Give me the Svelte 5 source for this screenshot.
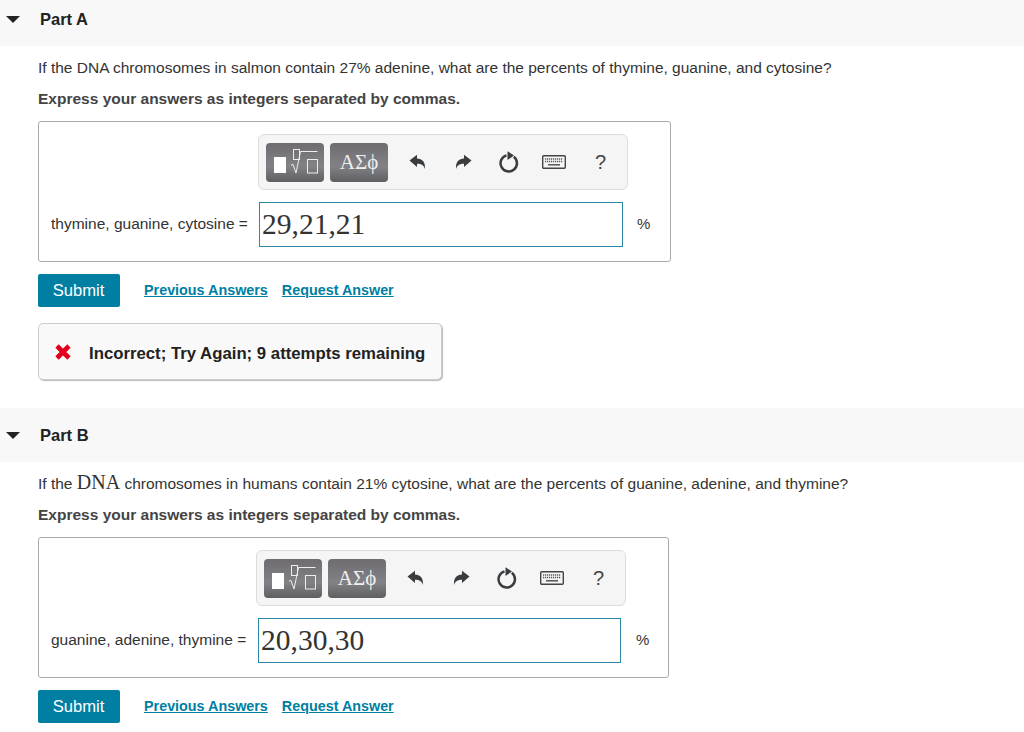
<script>
	const parts = [
		{
			name: 'Part A',
			label: 'thymine, guanine, cytosine =',
			value: '29,21,21',
			wide: true,
			incorrect: true
		},
		{
			name: 'Part B',
			label: 'guanine, adenine, thymine =',
			value: '20,30,30',
			wide: false,
			incorrect: false
		}
	];
</script>

{#snippet tools()}
	<div class="toolbar">
		<button class="tplBtn" aria-label="templates">
			<svg width="58" height="39" viewBox="0 0 58 39">
				<rect x="8" y="14" width="12" height="16" fill="#fff" />
				<g fill="none" stroke="#eee" stroke-width="1">
					<rect x="27.500" y="6.500" width="6" height="10" />
					<path d="M25 22l2-.5 3 8.500 4.500-21.500h17" />
					<rect x="41.500" y="16.500" width="10" height="13.500" />
				</g>
			</svg>
		</button>
		<button class="greek">ΑΣϕ</button>
		<span class="icons">
			<svg class="undo" width="20" height="20" viewBox="0 0 20 20">
				<path d="M1.500 8.500 9 2.800v3.700c5 .2 8.500 3 8 10.500-1.200-3.800-3.500-5.300-8-5.300v3.300z" fill="#3a3d40" />
			</svg>
			<svg class="redo" width="20" height="20" viewBox="0 0 20 20">
				<path d="M18.500 8.500 11 2.800v3.700c-5 .2-8.500 3-8 10.500 1.200-3.800 3.500-5.300 8-5.300v3.300z" fill="#3a3d40" />
			</svg>
			<svg class="reset" width="24" height="24" viewBox="0 0 24 24">
				<path d="M16.800 6.800A8.200 8.200 0 1 1 9.500 5.400" fill="none" stroke="#3a3d40" stroke-width="2.500" />
				<path d="M10.500 1.200 17 5.500l-6.500 4.500z" fill="#3a3d40" />
			</svg>
			<svg class="keyboard" width="24" height="14" viewBox="0 0 24 14">
				<rect x=".7" y=".7" width="22.600" height="12.600" rx="1" fill="#f5f5f5" stroke="#444" stroke-width="1.400" />
				<path d="M3 4h18M3 6.500h18" stroke="#555" stroke-width="1.500" stroke-dasharray="1.200 .8" />
				<path d="M6 9.800h12" stroke="#555" stroke-width="1.500" />
			</svg>
			<span class="help">?</span>
		</span>
	</div>
{/snippet}

<main>
	{#each parts as part}
		<section class:wide={part.wide}>
			<header>
				<span class="caret"></span>
				<h2>{part.name}</h2>
			</header>
			<div class="body">
				{#if part.wide}
					<p class="question">If the DNA chromosomes in salmon contain 27% adenine, what are the percents of thymine, guanine, and cytosine?</p>
				{:else}
					<p class="question">If the <span class="math">DNA</span> chromosomes in humans contain 21% cytosine, what are the percents of guanine, adenine, and thymine?</p>
				{/if}
				<p class="instruction">Express your answers as integers separated by commas.</p>
				<div class="answerBox">
					<div class="toolRow">
						{@render tools()}
					</div>
					<div class="inputRow">
						<span class="label">{part.label}</span>
						<div class="input">{part.value}</div>
						<span class="unit">%</span>
					</div>
				</div>
				<div class="actions">
					<button class="submit">Submit</button>
					<a href="#prev">Previous Answers</a>
					<a href="#req">Request Answer</a>
				</div>
				{#if part.incorrect}
					<div class="feedback">
						<svg width="18" height="18" viewBox="0 0 18 18">
							<path d="M3 3 15 15M15 3 3 15" stroke="#e3001b" stroke-width="4.600" />
						</svg>
						<span>Incorrect; Try Again; 9 attempts remaining</span>
					</div>
				{/if}
			</div>
		</section>
	{/each}
</main>

<style>
	:global(body) {
		margin: 0;
		background: #fff;
		font-family: "Liberation Sans", Arial, sans-serif;
		color: #333;
	}
	main {
		height: 732px;
		overflow: hidden;
	}
	header {
		display: flex;
		align-items: center;
		height: 54px;
		background: #f8f8f8;
	}
	.wide header {
		height: 46px;
		padding-bottom: 8px;
		box-sizing: border-box;
	}
	.caret {
		width: 0;
		height: 0;
		margin-left: 6px;
		border-left: 7px solid transparent;
		border-right: 7px solid transparent;
		border-top: 7px solid #222;
	}
	h2 {
		margin: 0 0 0 20px;
		font-size: 16.500px;
		font-weight: bold;
		color: #222;
	}
	.body {
		padding: 13px 0 0 38px;
	}
	.wide .body {
		height: 362px;
		box-sizing: border-box;
	}
	.question {
		margin: 0;
		font-size: 15.500px;
		line-height: 18px;
		color: #333;
	}
	.math {
		font-family: "Liberation Serif", serif;
		font-size: 20px;
		line-height: 0;
	}
	.instruction {
		margin: 13px 0 0;
		font-size: 15.500px;
		line-height: 18px;
		font-weight: bold;
		color: #444;
	}
	.answerBox {
		box-sizing: border-box;
		width: 631px;
		height: 141px;
		margin-top: 13px;
		border: 1px solid #aaa;
		border-radius: 3px;
		padding-top: 12px;
	}
	.wide .answerBox {
		width: 633px;
	}
	.toolRow {
		padding-left: 217px;
	}
	.wide .toolRow {
		padding-left: 219px;
	}
	.toolbar {
		box-sizing: border-box;
		display: flex;
		align-items: center;
		width: 370px;
		height: 56px;
		padding-left: 7px;
		gap: 6px;
		background: #f5f5f5;
		border: 1px solid #ddd;
		border-radius: 6px;
	}
	.tplBtn,
	.greek {
		box-sizing: border-box;
		height: 39px;
		padding: 0;
		border: 0;
		border-radius: 4px;
		background: linear-gradient(#6e6c70, #828185 60%, #5f5e61);
	}
	.tplBtn {
		width: 58px;
		display: flex;
		align-items: center;
		justify-content: center;
	}
	.greek {
		width: 58px;
		color: #eee;
		font-family: "Liberation Serif", serif;
		font-size: 21px;
	}
	.icons {
		display: flex;
		align-items: center;
	}
	.undo {
		margin-left: 14px;
	}
	.redo {
		margin-left: 25px;
	}
	.reset {
		margin-left: 24px;
	}
	.keyboard {
		margin-left: 21px;
	}
	.help {
		margin-left: 29px;
		font-size: 20px;
		color: #444;
	}
	.inputRow {
		display: flex;
		align-items: center;
		margin-top: 12px;
		padding-left: 12px;
	}
	.label {
		width: 207px;
		margin-bottom: 2px;
		font-size: 15.500px;
		white-space: nowrap;
		color: #333;
	}
	.wide .label {
		width: 208px;
	}
	.input {
		box-sizing: border-box;
		width: 363px;
		height: 45px;
		padding-left: 2px;
		border: 1px solid #2a87a6;
		font-family: "Liberation Serif", serif;
		font-size: 29.500px;
		line-height: 42px;
		color: #333;
	}
	.wide .input {
		width: 364px;
	}
	.unit {
		margin-left: 15px;
		margin-bottom: 2px;
		font-size: 15px;
	}
	.wide .unit {
		margin-left: 14px;
	}
	.actions {
		display: flex;
		align-items: center;
		margin-top: 12px;
		height: 33px;
	}
	.submit {
		width: 82px;
		height: 33px;
		margin-right: 24px;
		padding: 1px 1px 0 0;
		border: 0;
		border-radius: 2px;
		background: #007fa3;
		color: #fff;
		font-family: inherit;
		font-size: 16.600px;
	}
	a {
		margin-right: 14px;
		margin-bottom: 2px;
		font-size: 14.350px;
		font-weight: bold;
		color: #007fa3;
		text-decoration: underline;
	}
	.feedback {
		box-sizing: border-box;
		display: flex;
		align-items: center;
		gap: 17px;
		width: 404px;
		height: 57px;
		margin-top: 16px;
		padding-left: 15px;
		background: #f9f9f9;
		border: 1px solid #ccc;
		border-radius: 5px;
		box-shadow: 1px 1px 1px #bbb;
		font-size: 16.750px;
		font-weight: bold;
		color: #222;
	}
	.feedback span {
		margin-top: 5px;
	}
</style>
